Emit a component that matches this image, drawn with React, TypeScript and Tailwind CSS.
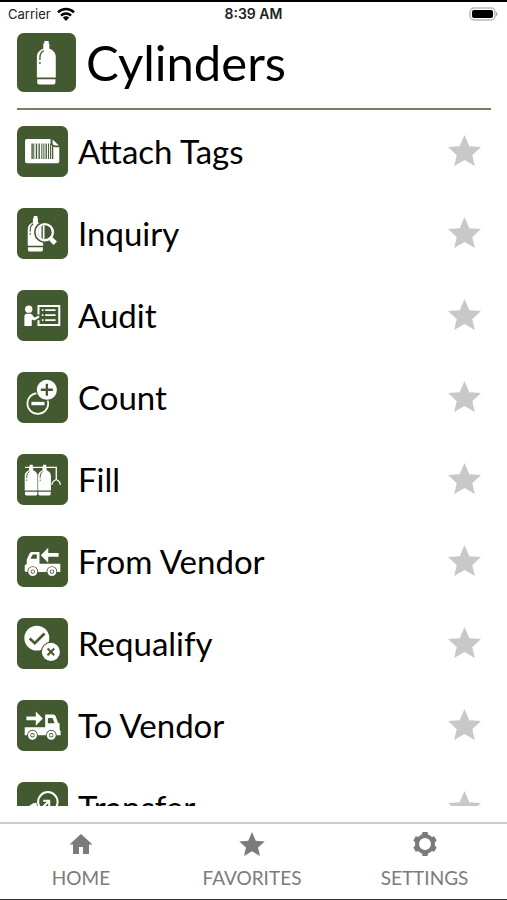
import { useState } from 'react';
import type { ReactNode } from 'react';

const GREEN = '#435a31';

const Cylinder = ({ transform }: { transform?: string }) => (
  <g transform={transform}>
    <path fill="#fff" d="M22 0h13v7h2v16c12 4 19 13 19 24v61H0V47c0-11 7-20 19-24V7h3z" />
    <path fill="#fff" d="M1 113h54v10q0 6-6 6H7q-6 0-6-6z" />
    <path fill="none" stroke={GREEN} strokeWidth="4" d="M20 28Q9 36 9 48v8M9 62v6" />
  </g>
);

const Wheel = ({ cx, cy }: { cx: number; cy: number }) => (
  <g>
    <circle cx={cx} cy={cy} r="16" fill={GREEN} />
    <circle cx={cx} cy={cy} r="10" fill="none" stroke="#fff" strokeWidth="7" />
    <circle cx={cx} cy={cy} r="4" fill="#fff" />
  </g>
);

const icons: Record<string, ReactNode> = {
  tags: (
    <>
      <path fill="#fff" d="M29 39h71v9q0 15 15 15h11v43q0 5-5 5H29q-5 0-5-5V44q0-5 5-5z" />
      <path fill="#fff" d="M106 40l19 18h-12q-7 0-7-7z" />
      <path stroke={GREEN} strokeWidth="4" d="M45 52v46M58 52v46M66 52v46M87 52v46M106 58v40" />
      <path stroke={GREEN} strokeWidth="3" d="M50 52v46M74 52v46M80 52v46M94 52v46M100 52v46" />
    </>
  ),
  inquiry: (
    <>
      <Cylinder transform="translate(32 24) scale(0.82)" />
      <circle cx="83" cy="72" r="32" fill={GREEN} />
      <path fill="#fff" d="M73 54v36a21 21 0 010-36zM77 52h5v40h-5z" />
      <circle cx="83" cy="72" r="24" fill="none" stroke="#fff" strokeWidth="7" />
      <path stroke="#fff" strokeWidth="8" d="M98 87l8 8" />
      <path stroke="#fff" strokeWidth="14" d="M101 92l13 13" />
    </>
  ),
  audit: (
    <>
      <circle cx="35" cy="57" r="11" fill="#fff" />
      <path fill="#fff" d="M30 71h10q5 0 9 8l3 3 12-5q5 1 2 6l-14 8-8-3v19H22V80q0-9 8-9z" />
      <path fill="none" stroke="#fff" strokeWidth="6" d="M64 73V48h62v56H64V90" />
      <path stroke="#fff" strokeWidth="5" d="M74 60h5M84 60h31M74 75h5M84 75h31M74 90h5M84 90h31" />
    </>
  ),
  count: (
    <>
      <circle cx="62" cy="94" r="31" fill="none" stroke="#fff" strokeWidth="5" />
      <path stroke="#fff" strokeWidth="10" d="M43 94h39" />
      <circle cx="89" cy="53" r="33" fill={GREEN} />
      <circle cx="89" cy="53" r="30" fill="#fff" />
      <path stroke={GREEN} strokeWidth="7" d="M71 53h36M89 35v36" />
    </>
  ),
  fill: (
    <>
      <path fill="none" stroke="#fff" strokeWidth="4" d="M24 40h93v36M104 92q0-10 13-16q12 6 12 16" />
      <Cylinder transform="translate(23 32) scale(0.68 0.71)" />
      <Cylinder transform="translate(63 32) scale(0.68 0.71)" />
    </>
  ),
  fromVendor: (
    <>
      <path fill="#fff" d="M44 48h23v35h62v24H27q-4 0-4-4V88l6-5v-12l8-18q2-5 7-5z" />
      <path fill={GREEN} d="M47 55h12v13H40z" />
      <path fill="#fff" d="M71 57l22-22v16h31v11H93v18z" />
      <Wheel cx={47} cy={106} />
      <Wheel cx={104} cy={106} />
    </>
  ),
  requalify: (
    <>
      <circle cx="59" cy="60" r="37" fill="#fff" />
      <path fill="none" stroke={GREEN} strokeWidth="8" d="M38 61l15 14 29-29" />
      <circle cx="101" cy="101" r="30" fill={GREEN} />
      <circle cx="101" cy="101" r="27" fill="#fff" />
      <path stroke={GREEN} strokeWidth="6" d="M91 91l20 20M111 91l-20 20" />
    </>
  ),
  toVendor: (
    <>
      <path fill="#fff" d="M84 43h24q5 0 7 5l7 19 5 4v17l3 5v12H23V81h61z" />
      <path fill={GREEN} d="M92 54h14l6 15H92z" />
      <path fill="#fff" d="M77 55L56 34v15H28v11h28v17z" />
      <Wheel cx={46} cy={105} />
      <Wheel cx={102} cy={105} />
    </>
  ),
  transfer: (
    <>
      <circle cx="60" cy="92" r="31" fill="#fff" />
      <circle cx="92" cy="59" r="34" fill={GREEN} />
      <circle cx="92" cy="59" r="29" fill="none" stroke="#fff" strokeWidth="6" />
      <path fill="none" stroke="#fff" strokeWidth="6" d="M78 56h18v20M96 56L70 82" />
    </>
  ),
};

const menu = [
  { id: 'tags', label: 'Attach Tags' },
  { id: 'inquiry', label: 'Inquiry' },
  { id: 'audit', label: 'Audit' },
  { id: 'count', label: 'Count' },
  { id: 'fill', label: 'Fill' },
  { id: 'fromVendor', label: 'From Vendor' },
  { id: 'requalify', label: 'Requalify' },
  { id: 'toVendor', label: 'To Vendor' },
  { id: 'transfer', label: 'Transfer' },
];

const Star = ({ className }: { className: string }) => (
  <svg className={className} viewBox="0 0 34 32" fill="currentColor" aria-hidden="true">
    <path d="M17 0l5 11.500 12 1-9 8.300 2.700 11.200L17 25.800 6.300 32 9 20.800 0 12.500l12-1z" />
  </svg>
);

const tabs = [
  {
    label: 'HOME',
    icon: (
      <svg className="h-6 w-6" viewBox="0 0 24 24" fill="currentColor" aria-hidden="true">
        <path d="M12 2L0.500 12.500H4V22h6v-7h4v7h6v-9.500h3.500z" />
      </svg>
    ),
  },
  { label: 'FAVORITES', icon: <Star className="h-6 w-[26px]" /> },
  {
    label: 'SETTINGS',
    icon: (
      <svg className="h-6 w-6" viewBox="0 0 24 24" aria-hidden="true">
        <circle cx="12" cy="12" r="8" fill="none" stroke="currentColor" strokeWidth="4" />
        <path
          fill="currentColor"
          d="M9.500 0h5l1 4h-7zM9.500 24h5l1-4h-7zM21.200 4.300l2.500 4.300-3 3-3.400-6.100zM23.700 15.400l-2.500 4.300-3.900-1.200 3.400-6.100zM2.800 4.300L.3 8.600l3 3 3.400-6.100zM.3 15.400l2.500 4.300 3.900-1.200-3.400-6.100z"
        />
      </svg>
    ),
  },
];

const App = () => {
  const [favorites, setFavorites] = useState<string[]>([]);

  const toggleFavorite = (id: string) => {
    setFavorites(favorites.includes(id) ? favorites.filter((f) => f !== id) : [...favorites, id]);
  };

  return (
    <div className="flex h-screen flex-col border-t-2 border-b border-t-black border-b-[#333] bg-white font-['Lato',sans-serif] text-black">
      <div className="grid h-6 shrink-0 grid-cols-3 items-center px-2 font-['Inter',sans-serif] text-sm">
        <div className="flex items-center gap-1.5 text-[13px] text-[#222]">
          Carrier
          <svg className="h-[14px] w-[18px]" viewBox="0 0 18 14" fill="none" stroke="#000" aria-hidden="true">
            <path strokeWidth="2.500" d="M1 5.300a11.500 11.500 0 0116 0M4 8.600a7.200 7.200 0 0110 0" />
            <path fill="#000" stroke="none" d="M9 14l-3.200-3.400a4.600 4.600 0 016.400 0z" />
          </svg>
        </div>
        <div className="text-center font-semibold text-[#222]">8:39 AM</div>
        <svg className="h-[14px] w-[30px] justify-self-end" viewBox="0 0 30 14" aria-hidden="true">
          <rect x="1" y="1" width="25" height="12" rx="4" fill="#fff" stroke="#bbb" strokeWidth="1.500" />
          <rect x="3" y="3" width="21" height="8" rx="2" fill="#000" />
          <path fill="#aaa" d="M27 4.500q3 2.500 0 5z" />
        </svg>
      </div>

      <header className="mr-4 ml-[17px] flex shrink-0 items-center gap-2.5 border-b-2 border-[#718360] pt-[7px] pb-4">
        <svg className="h-[59px] w-[59px] shrink-0" viewBox="0 0 175 175" aria-hidden="true">
          <rect width="175" height="175" rx="20" fill={GREEN} />
          <Cylinder transform="translate(59 24)" />
        </svg>
        <h1 className="text-[49px] leading-[59px]">Cylinders</h1>
      </header>

      <main className="mr-4 ml-[17px] min-h-0 flex-1 overflow-hidden pt-4">
        <ul className="flex flex-col gap-[31px]">
          {menu.map((item) => (
            <li key={item.id} className="flex items-center justify-between pr-2.5">
              <button className="flex items-center gap-2.5 text-left">
                <svg className="h-[51px] w-[51px] shrink-0" viewBox="0 0 152 152" aria-hidden="true">
                  <rect width="152" height="152" rx="20" fill={GREEN} />
                  {icons[item.id]}
                </svg>
                <span className="text-[33px] leading-[51px]">{item.label}</span>
              </button>
              <button
                aria-label={`Favorite ${item.label}`}
                aria-pressed={favorites.includes(item.id)}
                onClick={() => toggleFavorite(item.id)}
                className={favorites.includes(item.id) ? 'pb-0.5 text-[#435a31]' : 'pb-0.5 text-[#c8c8c8]'}
              >
                <Star className="h-[31px] w-[33px]" />
              </button>
            </li>
          ))}
        </ul>
      </main>

      <nav className="mt-4 grid h-[77px] shrink-0 grid-cols-[162px_1fr_165px] border-t-2 border-[#ccc] pt-2 text-[#7b7b7b]">
        {tabs.map((tab) => (
          <button key={tab.label} className="flex flex-col items-center gap-2">
            {tab.icon}
            <span className="text-[19px] leading-7">{tab.label}</span>
          </button>
        ))}
      </nav>
    </div>
  );
};

export default App;
